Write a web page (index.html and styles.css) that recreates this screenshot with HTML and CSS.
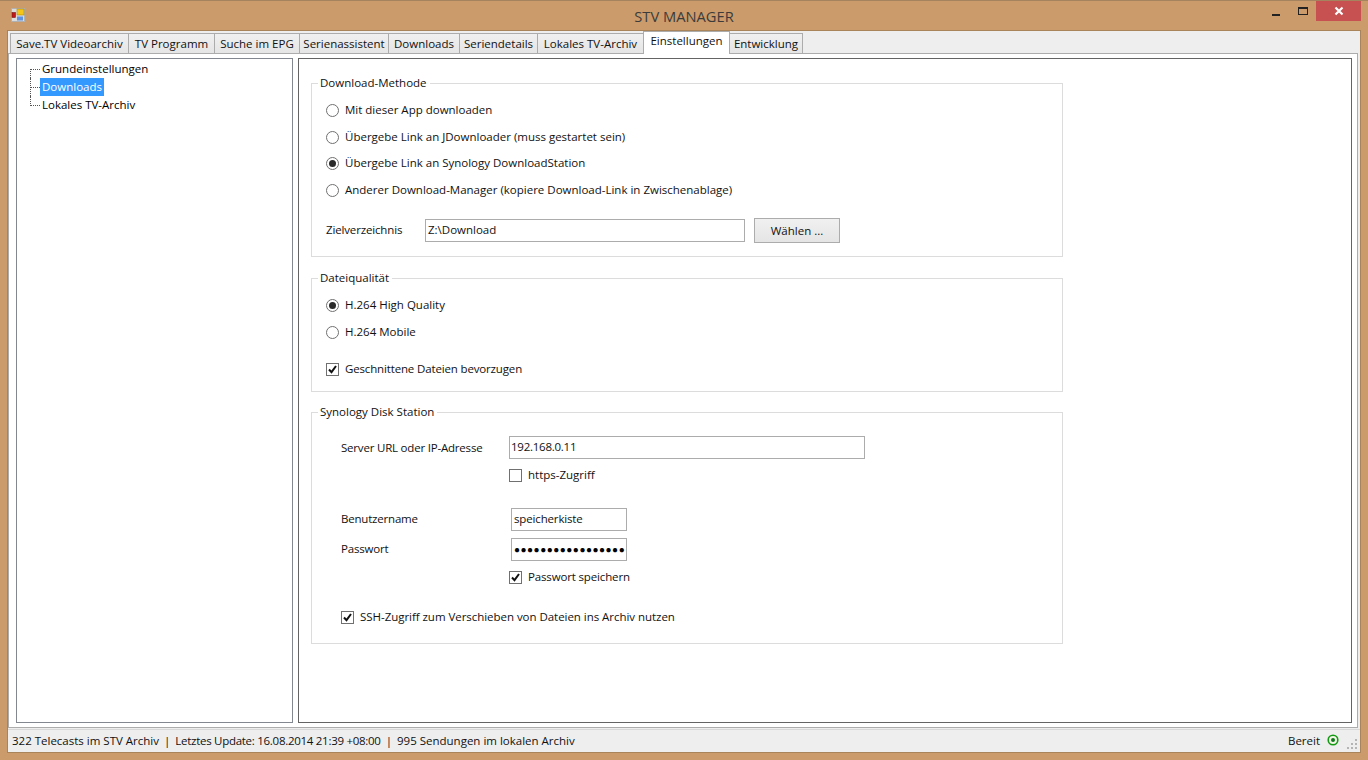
FILE: index.html
```html
<!DOCTYPE html>
<html lang="de">
<head>
<meta charset="utf-8">
<title>STV MANAGER</title>
<link rel="stylesheet" href="styles.css">
</head>
<body>
<div class="window">
  <header class="titlebar">
    <div class="title-left">
      <svg class="app-icon" width="15" height="15" viewBox="0 0 15 15">
        <rect x="0.5" y="0.5" width="13" height="13" fill="#dcdcdc" stroke="#b0b0b0"/>
        <rect x="1" y="4.5" width="3.5" height="5" fill="#c01818" stroke="#7a1a1a" stroke-width="0.6"/>
        <rect x="6" y="1" width="7" height="6" fill="#f5c518" stroke="#b08a10" stroke-width="0.6"/>
        <rect x="6" y="8.5" width="6" height="4" fill="#5f92e0"/>
      </svg>
    </div>
    <div class="title-text">STV MANAGER</div>
    <div class="controls">
      <span class="ctl ctl-min"><i></i></span>
      <span class="ctl ctl-max"><i></i></span>
      <span class="ctl ctl-close">
        <svg width="10" height="10" viewBox="0 0 10 10"><path d="M1.5 1.5 L8.5 8.5 M8.5 1.5 L1.5 8.5" stroke="#fff" stroke-width="2.2" fill="none"/></svg>
      </span>
    </div>
  </header>
  <div class="client">
    <nav class="tabs">
      <span class="tab">Save.TV Videoarchiv</span>
      <span class="tab">TV Programm</span>
      <span class="tab">Suche im EPG</span>
      <span class="tab">Serienassistent</span>
      <span class="tab">Downloads</span>
      <span class="tab">Seriendetails</span>
      <span class="tab">Lokales TV-Archiv</span>
      <span class="tab tab-active">Einstellungen</span>
      <span class="tab">Entwicklung</span>
    </nav>
    <main class="page">
      <aside class="tree">
        <ul class="tree-list">
          <li class="node"><span class="node-label">Grundeinstellungen</span></li>
          <li class="node"><span class="node-label node-selected">Downloads</span></li>
          <li class="node"><span class="node-label">Lokales TV-Archiv</span></li>
        </ul>
      </aside>
      <section class="settings">
        <fieldset class="group group-method">
          <legend>Download-Methode</legend>
          <div class="opt opt-tall"><span class="radio"></span>Mit dieser App downloaden</div>
          <div class="opt"><span class="radio"></span>Übergebe Link an JDownloader (muss gestartet sein)</div>
          <div class="opt"><span class="radio checked"></span>Übergebe Link an Synology DownloadStation</div>
          <div class="opt opt-tall"><span class="radio"></span>Anderer Download-Manager (kopiere Download-Link in Zwischenablage)</div>
          <div class="target-row">
            <span class="target-label">Zielverzeichnis</span>
            <span class="field field-target">Z:\Download</span>
            <span class="button">Wählen ...</span>
          </div>
        </fieldset>
        <fieldset class="group group-quality">
          <legend>Dateiqualität</legend>
          <div class="opt opt-tall"><span class="radio checked"></span>H.264 High Quality</div>
          <div class="opt"><span class="radio"></span>H.264 Mobile</div>
          <div class="opt opt-cut"><span class="check checked"><svg width="11" height="11" viewBox="0 0 11 11"><path d="M2 5.5 L4.5 8.2 L9 2" stroke="#111" stroke-width="2" fill="none"/></svg></span>Geschnittene Dateien bevorzugen</div>
        </fieldset>
        <fieldset class="group group-disk">
          <legend>Synology Disk Station</legend>
          <div class="form-row row-url">
            <span class="form-label label-url">Server URL oder IP-Adresse</span>
            <span class="field field-url">192.168.0.11</span>
          </div>
          <div class="check-row row-https"><span class="check"></span>https-Zugriff</div>
          <div class="form-row row-user">
            <span class="form-label">Benutzername</span>
            <span class="field field-short">speicherkiste</span>
          </div>
          <div class="form-row row-pass">
            <span class="form-label">Passwort</span>
            <span class="field field-short field-pass">●●●●●●●●●●●●●●●●●</span>
          </div>
          <div class="check-row row-save"><span class="check checked"><svg width="11" height="11" viewBox="0 0 11 11"><path d="M2 5.5 L4.5 8.2 L9 2" stroke="#111" stroke-width="2" fill="none"/></svg></span>Passwort speichern</div>
          <div class="check-row row-ssh"><span class="check checked"><svg width="11" height="11" viewBox="0 0 11 11"><path d="M2 5.5 L4.5 8.2 L9 2" stroke="#111" stroke-width="2" fill="none"/></svg></span>SSH-Zugriff zum Verschieben von Dateien ins Archiv nutzen</div>
        </fieldset>
      </section>
    </main>
    <footer class="status">
      <span class="status-text"><span>322 Telecasts im STV Archiv</span><span class="sep">|</span><span class="status-update">Letztes Update: 16.08.2014 21:39 +08:00</span><span class="sep">|</span><span>995 Sendungen im lokalen Archiv</span></span>
      <span class="status-right">
        <span>Bereit</span>
        <svg class="status-icon" width="12" height="12" viewBox="0 0 12 12"><circle cx="6" cy="6" r="4.8" fill="#f4f4e8" stroke="#129a12" stroke-width="1.6"/><circle cx="6" cy="6" r="2" fill="#0d7a1a"/></svg>
        <svg class="grip" width="12" height="12" viewBox="0 0 12 12" fill="#b4b4b4"><rect x="9" y="1" width="2" height="2"/><rect x="5" y="5" width="2" height="2"/><rect x="9" y="5" width="2" height="2"/><rect x="1" y="9" width="2" height="2"/><rect x="5" y="9" width="2" height="2"/><rect x="9" y="9" width="2" height="2"/></svg>
      </span>
    </footer>
  </div>
</div>
</body>
</html>
```
FILE: styles.css
```css
* { box-sizing: border-box; }
html, body { margin: 0; padding: 0; height: 100%; overflow: hidden; }
body {
  font-family: "Open Sans", "Noto Sans", "Liberation Sans", sans-serif;
  font-size: 11.5px;
  line-height: 16px;
  color: #111;
  background: #cb9b6b;
}
.window {
  display: flex;
  flex-direction: column;
  height: 760px;
  border-top: 1px solid #a5835f;
}
.titlebar {
  display: grid;
  grid-template-columns: 1fr auto 1fr;
  height: 29px;
  flex: none;
}
.title-left { display: flex; padding: 7px 0 0 11px; }
.title-text { font-size: 14.7px; line-height: 30px; color: #3b3b3b; }
.controls { display: flex; justify-content: flex-end; align-items: flex-start; padding-right: 7px; }
.ctl { display: flex; align-items: center; justify-content: center; height: 20px; }
.ctl-min { width: 28px; }
.ctl-min i { display: block; width: 8px; height: 2px; background: #222; margin-top: 8px; }
.ctl-max { width: 26px; }
.ctl-max i { display: block; width: 10px; height: 8px; border: 1px solid #222; border-top-width: 2px; margin-top: -1px; }
.ctl-close { width: 45px; background: #c75050; }

.client {
  flex: 1;
  display: flex;
  flex-direction: column;
  margin: 0 7px 7px;
  background: #eeeeee;
  border: 1px solid #a98359;
  min-height: 0;
}
.tabs {
  display: flex;
  align-items: flex-end;
  height: 22px;
  padding-left: 2px;
  flex: none;
  position: relative;
  z-index: 1;
}
.tab {
  height: 20px;
  flex: none;
  text-align: center;
  line-height: 19px;
  border: 1px solid #acacac;
  border-bottom: none;
  margin-right: -1px;
  background: linear-gradient(#f0f0f0, #e5e5e5);
  white-space: nowrap;
}
.tab:nth-child(1) { width: 119px; }
.tab:nth-child(2) { width: 87px; }
.tab:nth-child(3) { width: 86px; }
.tab:nth-child(4) { width: 90px; }
.tab:nth-child(5) { width: 72px; }
.tab:nth-child(6) { width: 79px; }
.tab:nth-child(7) { width: 107px; }
.tab:nth-child(8) { width: 87px; }
.tab:nth-child(9) { width: 74px; }
.tab-active {
  height: 23px;
  margin-bottom: -1px;
  background: #fff;
  line-height: 18px;
  position: relative;
}
.page {
  flex: 1;
  min-height: 0;
  display: flex;
  gap: 5px;
  margin: 0 2px 0 0;
  padding: 4px 5px 4px 7px;
  background: #fff;
  border: 1px solid #acacac;
}
.tree {
  width: 277px;
  flex: none;
  border: 1px solid #828790;
  padding-top: 1px;
}
.tree-list { list-style: none; margin: 0; padding: 0 0 0 13px; }
.node { position: relative; height: 18px; padding-left: 10px; }
.node::before {
  content: "";
  position: absolute;
  left: 0;
  top: 9px;
  width: 10px;
  border-top: 1px dotted #555;
}
.node::after {
  content: "";
  position: absolute;
  left: 0;
  top: 0;
  height: 18px;
  border-left: 1px dotted #555;
}
.node:first-child::after { top: 9px; height: 9px; }
.node:last-child::after { height: 10px; }
.node-label { display: inline-block; height: 18px; padding: 0 2px; line-height: 17px; color: #000; }
.node-selected { background: #3399ff; color: #fff; }

.settings {
  flex: 1;
  min-width: 0;
  border: 1px solid #646464;
  padding: 16px 0 0 12px;
}
.group {
  width: 752px;
  margin: 0;
  padding: 5px 14px 0;
  border: 1px solid #dcdcdc;
  min-inline-size: 0;
}
.group legend { padding: 0 3px 0 2px; margin-left: -8px; line-height: 16px; height: 16px; }
.group-method { padding-bottom: 13px; margin-bottom: 13px; }
.group-quality { padding-bottom: 9px; margin-bottom: 12px; }
.group-disk { padding: 16px 29px 18px; }
.group-disk legend { margin-left: -23px; }
.opt { display: flex; align-items: center; height: 26px; white-space: nowrap; }
.opt-tall { height: 28px; }
.opt-cut { margin-top: 11px; letter-spacing: -0.15px; }
.radio {
  flex: none;
  width: 13px;
  height: 13px;
  margin-right: 6px;
  border: 1px solid #707070;
  border-radius: 50%;
  background: #fff;
  display: flex;
  align-items: center;
  justify-content: center;
}
.radio.checked::before { content: ""; width: 7px; height: 7px; border-radius: 50%; background: #2a2a2a; }
.check {
  flex: none;
  width: 13px;
  height: 13px;
  margin-right: 6px;
  border: 1px solid #707070;
  background: #fff;
  display: flex;
  align-items: center;
  justify-content: center;
}
.target-row { display: flex; align-items: center; height: 25px; margin-top: 14px; }
.target-label { width: 99px; flex: none; letter-spacing: -0.15px; padding-bottom: 1px; }
.field {
  display: block;
  height: 23px;
  padding: 0 2px;
  line-height: 20px;
  border: 1px solid #acacac;
  background: #fff;
  color: #111;
  white-space: nowrap;
  overflow: hidden;
}
.field-target { width: 320px; flex: none; }
.button {
  width: 86px;
  height: 25px;
  margin-left: 9px;
  flex: none;
  text-align: center;
  line-height: 23px;
  border: 1px solid #acacac;
  background: linear-gradient(#f0f0f0, #e5e5e5);
}
.form-row { display: flex; align-items: center; height: 23px; }
.form-label { width: 170px; flex: none; padding-bottom: 1px; letter-spacing: -0.2px; }
.label-url { width: 168px; padding-bottom: 0; padding-top: 1px; }
.field-url { width: 356px; padding-left: 1px; letter-spacing: -0.25px; }
.field-short { width: 116px; letter-spacing: -0.15px; }
.field-pass { font-size: 10px; letter-spacing: 0.5px; line-height: 20px; padding-left: 2px; color: #000; }
.check-row { display: flex; align-items: center; height: 16px; white-space: nowrap; }
.row-https { margin-top: 8px; padding-left: 168px; }
.row-user { margin-top: 25px; }
.row-pass { margin-top: 7px; }
.row-save { margin-top: 8px; padding-left: 168px; letter-spacing: -0.15px; }
.row-ssh { margin-top: 24px; letter-spacing: -0.04px; }

.status {
  flex: none;
  display: flex;
  justify-content: space-between;
  align-items: center;
  height: 23px;
  padding: 0 2px 0 4px;
  margin-top: 1px;
  border-top: 1px solid #d8d8d8;
}
.status-text { display: flex; white-space: nowrap; }
.sep { margin: 0 5px; }
.status-update { letter-spacing: -0.28px; }
.status-right { display: flex; align-items: center; }
.status-icon { margin: -2px 7px 0 7px; }
.grip { margin-top: 6px; }
```
